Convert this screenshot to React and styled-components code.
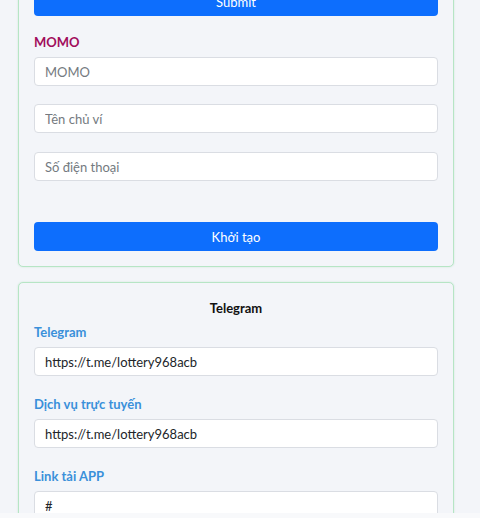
import React from 'react'
import styled, { createGlobalStyle } from 'styled-components'

const GlobalStyle = createGlobalStyle`
  html, body {
    margin: 0;
    padding: 0;
    background: #f8f9fb;
  }
  body {
    font-family: Lato, "Noto Sans", Arial, sans-serif;
    font-size: 13px;
    color: #212529;
  }
`;

const Page = styled.div`
  height: 513px;
  overflow: hidden;
  background: #f3f5f9;
`;

const Column = styled.div`
  width: 436px;
  margin: -29px 0 0 18px;
  display: flex;
  flex-direction: column;
  gap: 15px;
`;

const Card = styled.div`
  border: 1px solid #b6e5c5;
  border-radius: 5px;
  padding: 15px;
  background: #f3f5f9;
  box-shadow: 0 0 2px rgba(120, 210, 150, 0.35);
  display: flex;
  flex-direction: column;
`;

const Title = styled.div`
  text-align: center;
  font-weight: 700;
  line-height: 20px;
  color: #111;
  margin-bottom: 4px;
`;

const Label = styled.div`
  font-weight: 700;
  line-height: 20px;
  margin-bottom: 5px;
  color: ${p => p.tone === 'momo' ? '#a10d5c' : '#3a90da'};
`;

const Input = styled.input`
  box-sizing: border-box;
  width: 100%;
  height: 29px;
  margin: 0 0 ${p => p.gap || 18}px;
  padding: 0 10px;
  border: 1px solid #dadde3;
  border-radius: 4px;
  background: #fff;
  font-family: inherit;
  font-size: 13px;
  color: #212529;
  outline: none;
  &::placeholder {
    color: #747a80;
  }
`;

const Button = styled.button`
  box-sizing: border-box;
  width: 100%;
  height: 29px;
  margin-top: ${p => p.top || 0}px;
  margin-bottom: ${p => p.bottom || 0}px;
  border: none;
  border-radius: 4px;
  background: #0d6efd;
  color: #fff;
  font-family: inherit;
  font-size: 13px;
  cursor: pointer;
`;

const Field = ({ label, value }) => (
  <>
    <Label>{label}</Label>
    <Input gap={18} defaultValue={value} />
  </>
);

export default function App() {
  return (
    <Page>
      <GlobalStyle />
      <Column>
        <Card>
          <Button bottom={16}>Submit</Button>
          <Label tone="momo">MOMO</Label>
          <Input placeholder="MOMO" />
          <Input placeholder="Tên chủ ví" gap={19} />
          <Input placeholder="Số điện thoại" gap={41} />
          <Button>Khởi tạo</Button>
        </Card>
        <Card>
          <Title>Telegram</Title>
          <Field label="Telegram" value="https://t.me/lottery968acb" />
          <Field label="Dịch vụ trực tuyến" value="https://t.me/lottery968acb" />
          <Field label="Link tải APP" value="#" />
        </Card>
      </Column>
    </Page>
  )
}
